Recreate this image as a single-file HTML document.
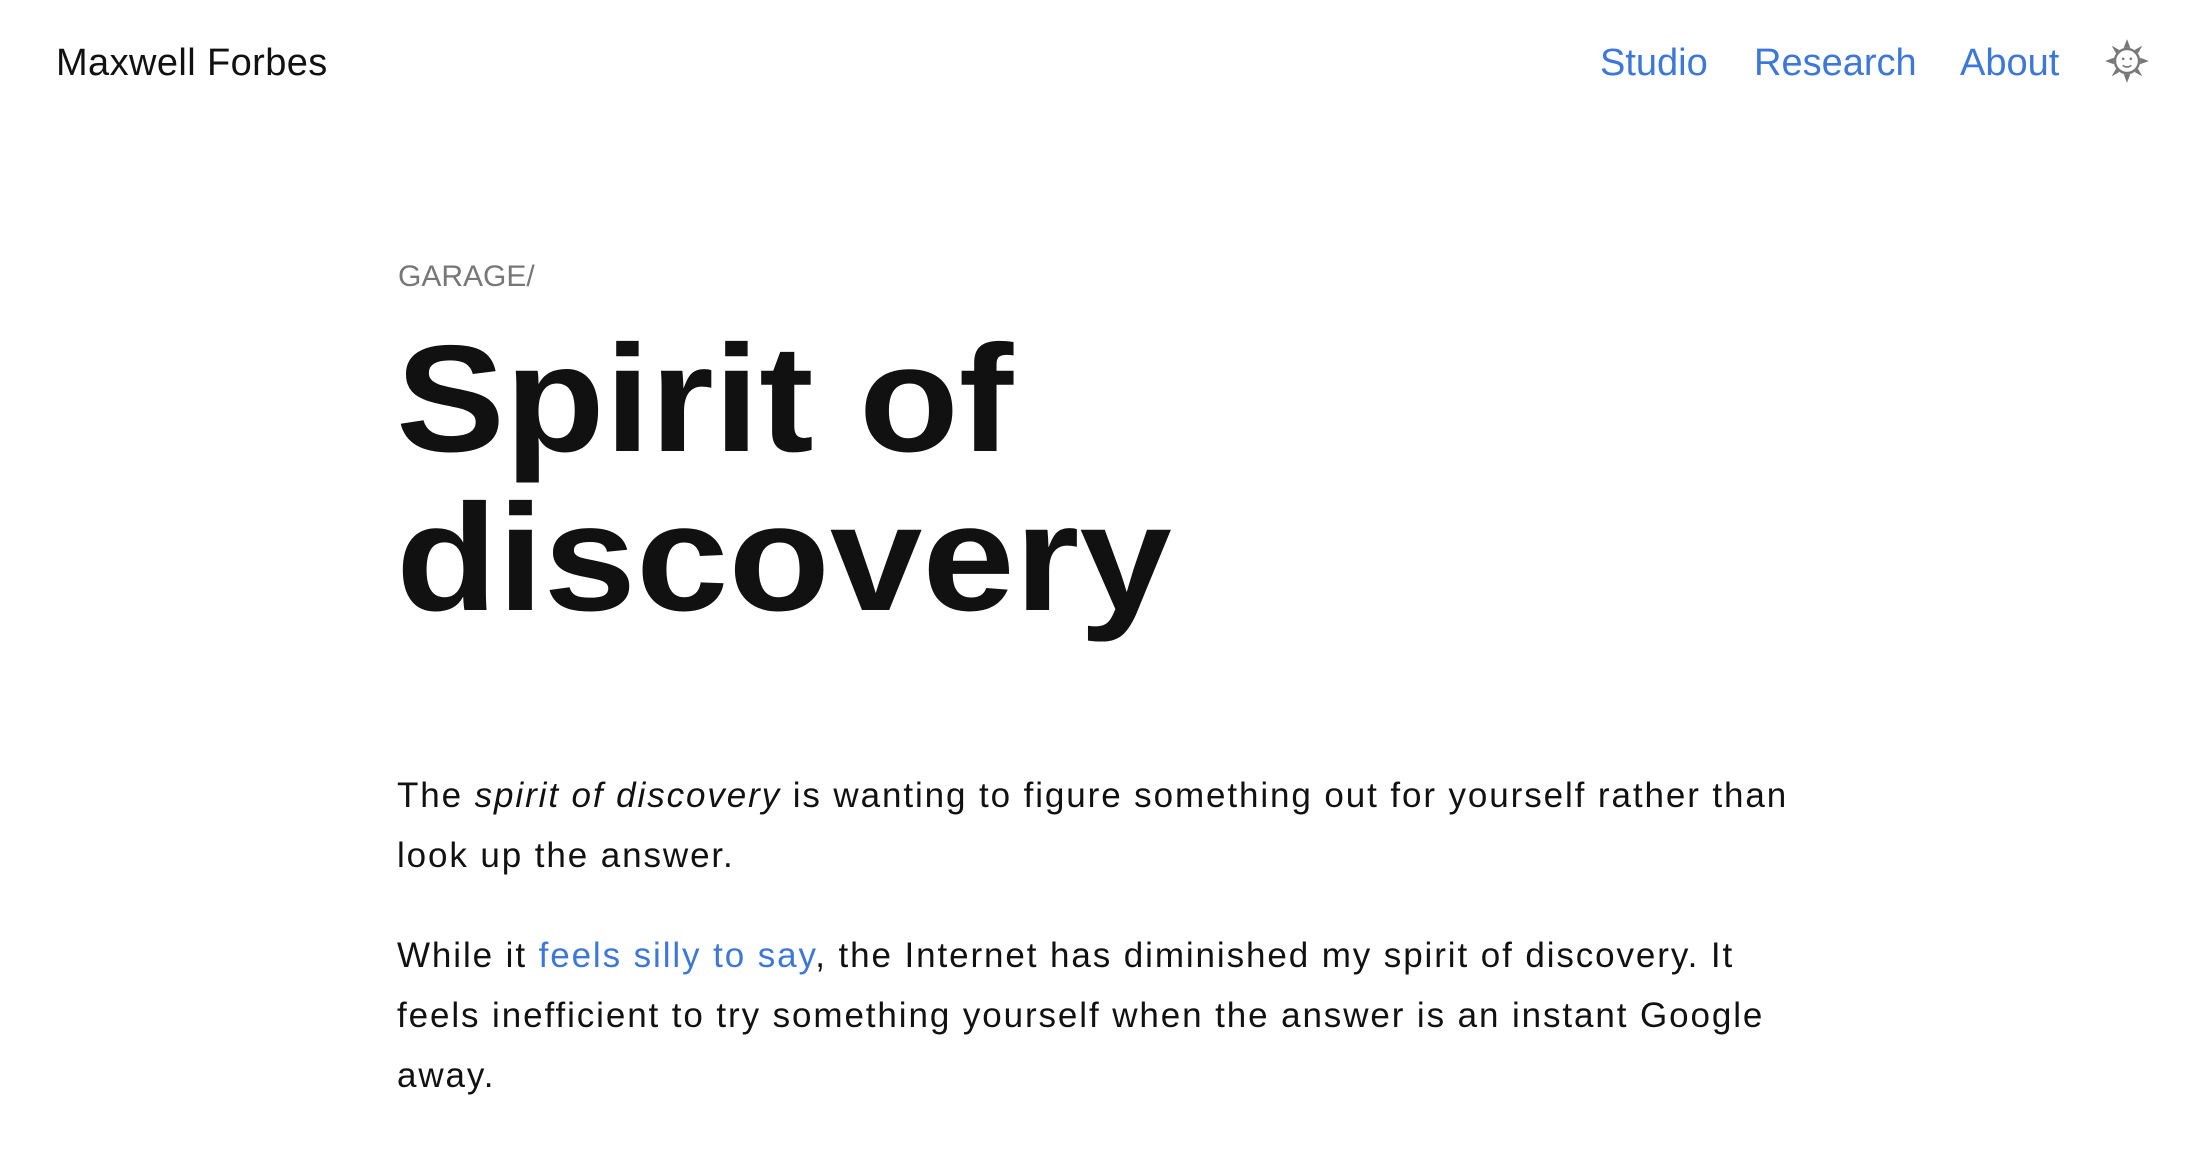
<!DOCTYPE html>
<html><head><meta charset="utf-8"><style>
html,body{margin:0;padding:0;background:#fff;width:2204px;height:1158px;overflow:hidden;font-family:"Liberation Sans",sans-serif;color:#111}
.a{position:absolute;white-space:nowrap;line-height:1}
.nav{color:#3d78d8;font-size:38px}
p{margin:0}
.h{font-size:152px;font-weight:bold;color:#111;transform-origin:0 0}
</style></head><body>
<div class="a" style="left:56px;top:44px;font-size:38px;color:#111;letter-spacing:0.4px">Maxwell Forbes</div>
<div class="a nav" style="left:1600px;top:44px">Studio</div>
<div class="a nav" style="left:1754px;top:44px">Research</div>
<div class="a nav" style="left:1960px;top:44px">About</div>
<svg style="position:absolute;left:2104px;top:38px" width="46" height="46" viewBox="0 0 42 42">
<g fill="#777"><polygon points="21,1 24,9 18,9"/><polygon points="21,41 24,33 18,33"/><polygon points="1,21 9,18 9,24"/><polygon points="41,21 33,18 33,24"/>
<polygon points="7,7 14,11 11,14"/><polygon points="35,7 31,14 28,11"/><polygon points="7,35 11,28 14,31"/><polygon points="35,35 28,31 31,28"/></g>
<circle cx="21" cy="21" r="11" fill="#fff" stroke="#777" stroke-width="2.2"/>
<circle cx="17.5" cy="19" r="1.2" fill="#777"/><circle cx="24.5" cy="19" r="1.2" fill="#777"/>
<path d="M17 25 Q21 28 25 25" stroke="#777" stroke-width="1.5" fill="none"/></svg>
<div class="a" style="left:398px;top:262px;font-size:30px;color:#777">GARAGE/</div>
<div class="a h" style="left:396px;top:323px;transform:scaleX(1.075)">Spirit of</div>
<div class="a h" style="left:396px;top:482px;transform:scaleX(1.093)">discovery</div>
<div class="a" style="left:397px;top:766px;font-size:35px;line-height:60px;letter-spacing:1.9px">
<p>The <i>spirit of discovery</i> is wanting to figure something out for yourself rather than<br>look up the answer.</p>
<p style="margin-top:40px">While it <span style="color:#3d78d8">feels silly to say</span>, the Internet has diminished my spirit of discovery. It<br>feels inefficient to try something yourself when the answer is an instant Google<br>away.</p>
</div>
</body></html>
